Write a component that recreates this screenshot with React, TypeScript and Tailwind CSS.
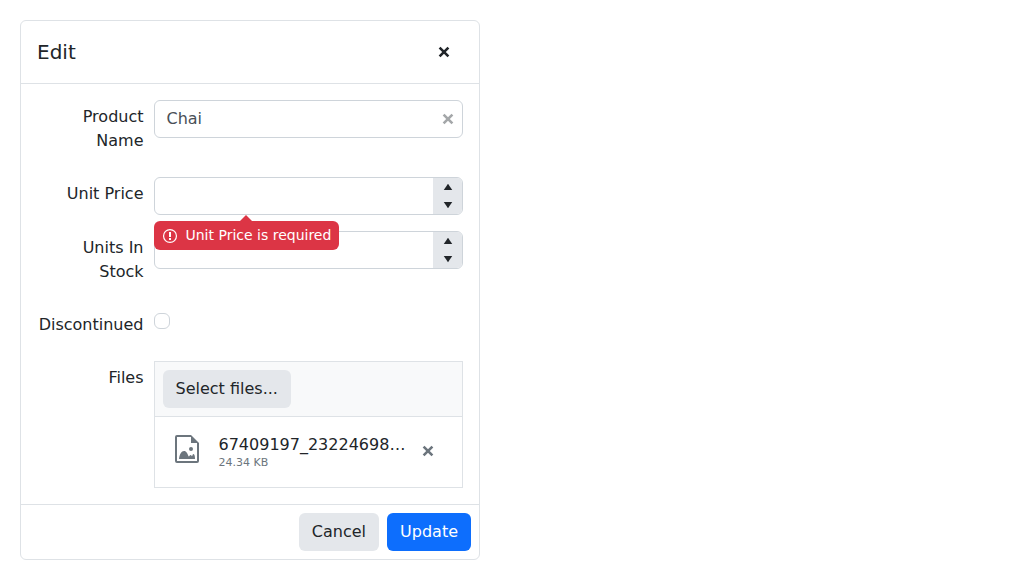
import type { ReactNode } from 'react';

function CloseIcon({ className = '' }: { className?: string }) {
  return (
    <svg viewBox="0 0 16 16" fill="none" stroke="currentColor" strokeWidth="2.600" className={`size-4 shrink-0 ${className}`}>
      <path d="m3.600 3.600 8.800 8.800M12.400 3.600l-8.800 8.800" />
    </svg>
  );
}

function ErrorIcon() {
  return (
    <svg viewBox="0 0 16 16" className="size-4 shrink-0">
      <circle cx="8" cy="8" r="6.450" fill="none" stroke="currentColor" strokeWidth="1.200" />
      <path d="M7 4h2v5H7zM7 10h2v2H7z" fill="currentColor" />
    </svg>
  );
}

function ImageFileIcon() {
  return (
    <svg viewBox="0 0 32 32" fill="currentColor" className="size-8 shrink-0">
      <path fillRule="evenodd" d="M6 2h14l8 8v18a2 2 0 0 1-2 2H6a2 2 0 0 1-2-2V4a2 2 0 0 1 2-2Zm0 2v24h20V10h-6V4Z" />
      <circle cx="20" cy="16" r="2" />
      <path d="M8 26c.5-4.800 2.500-8 5-8s3.500 2.600 4.700 5.500c.8-.2.900-1.500 1.800-1.500 1 0 1 1.200 1.500 1.200s.5-2.200 1.500-2.200 1.500 2.400 1.500 5Z" />
    </svg>
  );
}

function Row({ label, children }: { label: string; children: ReactNode }) {
  return (
    <div className="flex items-start gap-[10px]">
      <label className="w-[106.500px] shrink-0 pt-[5px] pb-2 text-right leading-6">{label}</label>
      <div className="min-w-0 flex-1">{children}</div>
    </div>
  );
}

function NumberInput() {
  return (
    <div className="flex h-[38px] overflow-hidden rounded-md border border-[#ced4da]">
      <div className="flex-1" />
      <div className="flex w-[29px] flex-col bg-[#e4e7eb]">
        <button className="flex flex-1 items-center justify-center">
          <svg viewBox="0 0 512 512" fill="currentColor" className="size-4"><path d="m256 150 136 202H120z" /></svg>
        </button>
        <button className="flex flex-1 items-center justify-center">
          <svg viewBox="0 0 512 512" fill="currentColor" className="size-4"><path d="M256 362 120 160h272z" /></svg>
        </button>
      </div>
    </div>
  );
}

export default function App() {
  return (
    <div className="p-5 font-['DejaVu_Sans',sans-serif] text-base leading-6 text-[#212529]">
      <div className="flex h-[540px] w-[460px] flex-col rounded-md border border-[#dee2e6] bg-white">
        <header className="flex h-[63px] items-center justify-between border-b border-[#dee2e6] px-4">
          <h1 className="text-xl leading-[30px]">Edit</h1>
          <button className="flex size-[38px] items-center justify-center" aria-label="Close"><CloseIcon /></button>
        </header>

        <div className="flex flex-1 flex-col gap-4 p-4">
          <Row label="Product Name">
            <div className="flex h-[38px] items-center justify-between rounded-md border border-[#ced4da] pr-[6px] pl-3">
              <span className="pb-px text-[#495057]">Chai</span>
              <CloseIcon className="text-[#a4a7a9]" />
            </div>
          </Row>
          <Row label="Unit Price">
            <div className="relative h-[38px]">
              <NumberInput />
              <div className="absolute top-11 left-0 z-10 flex h-[29px] w-[185px] items-center gap-2 rounded-md bg-[#dc3545] px-2 text-sm whitespace-nowrap text-white">
                <span className="absolute -top-[6px] left-[86.500px] border-x-6 border-b-6 border-x-transparent border-b-[#dc3545]" />
                <ErrorIcon />
                <span className="pb-px leading-[21px]">Unit Price is required</span>
              </div>
            </div>
          </Row>
          <Row label="Units In Stock"><NumberInput /></Row>
          <Row label="Discontinued">
            <div className="pt-[5px]"><div className="size-4 rounded-[6px] border border-[#ced4da]" /></div>
          </Row>
          <Row label="Files">
            <div className="border border-[#dee2e6]">
              <div className="border-b border-[#dee2e6] bg-[#f8f9fa] p-2">
                <button className="block h-[38px] rounded-md bg-[#e4e7eb] px-[13px] pb-px">Select files...</button>
              </div>
              <div className="flex h-[70px] items-center pr-[18px] pb-[2px] pl-4 text-[#6c757d]">
                <div className="pb-[4px]"><ImageFileIcon /></div>
                <div className="ml-4 whitespace-nowrap">
                  <div className="text-[#212529]">67409197_23224698…</div>
                  <div className="text-[11px] leading-3">24.34 KB</div>
                </div>
                <button className="ml-auto flex size-8 items-center justify-center" aria-label="Remove"><CloseIcon /></button>
              </div>
            </div>
          </Row>
        </div>

        <footer className="flex h-[55px] shrink-0 items-center justify-end gap-2 border-t border-[#dee2e6] px-2">
          <button className="h-[38px] rounded-md bg-[#e4e7eb] px-[13px] pb-px">Cancel</button>
          <button className="h-[38px] rounded-md bg-[#0d6efd] px-[13px] pb-px text-white">Update</button>
        </footer>
      </div>
    </div>
  );
}
